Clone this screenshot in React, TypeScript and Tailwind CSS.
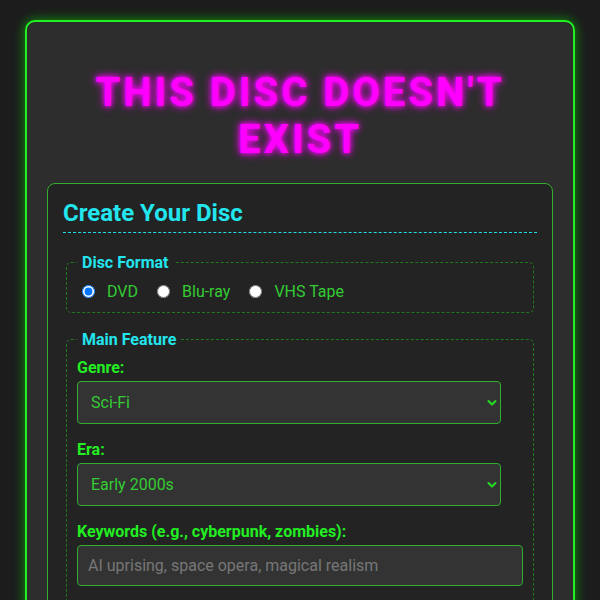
import { useState } from "react"

const formats = ["DVD", "Blu-ray", "VHS Tape"]

function Chevron() {
  return (
    <svg className="pointer-events-none absolute right-[4px] top-1/2 -translate-y-1/2" width="10" height="7" viewBox="0 0 10 7" fill="none">
      <path d="M1.5 1.5 5 5 8.5 1.5" stroke="#22dd22" strokeWidth="2" strokeLinecap="round" strokeLinejoin="round" />
    </svg>
  )
}

function Select({ value, options }: { value: string; options: string[] }) {
  return (
    <div className="relative mb-4 w-[95%]">
      <select
        defaultValue={value}
        className="block h-[43px] w-full appearance-none rounded-[4px] border border-[#2fae2f] bg-[#333333] pl-[13px] pr-6 text-[16px] leading-[normal] text-[#33cc33] outline-none"
      >
        {options.map((o) => (
          <option key={o}>{o}</option>
        ))}
      </select>
      <Chevron />
    </div>
  )
}

export default function App() {
  const [format, setFormat] = useState("DVD")

  return (
    <div className="min-h-screen bg-[#1c1c1c] px-5 pt-5 font-['Roboto',sans-serif] text-[16px] leading-[normal]">
      <div className="mx-auto max-w-[550px] rounded-[10px] border-2 border-[#22ee22] bg-[#2d2d2d] p-5 shadow-[0_0_12px_rgba(0,255,0,0.55)]">
        <h1 className="mt-[27px] mb-[20px] text-center text-[40px] font-bold uppercase leading-[47px] tracking-[3px] text-[#ff00ff] [text-shadow:0_0_5px_#ff00ff,0_0_10px_#ff00ff]">
          This Disc Doesn't Exist
        </h1>

        <div className="rounded-lg border border-[#2fae2f] bg-[#232323] p-[15px]">
          <h2 className="mb-[20px] border-b border-dashed border-[#22dde6] pb-[5px] text-[24px] font-bold leading-[28px] text-[#22e5ee]">
            Create Your Disc
          </h2>

          {/* format radios */}
          <fieldset className="mx-[3px] mb-[17px] rounded-[5px] border border-dashed border-[#1f7a1f] px-[10px] pb-[10px]">
            <legend className="px-[5px] font-bold text-[#22e5ee]">Disc Format</legend>
            <div className="pt-[10px] text-[#33cc33]">
              {formats.map((f) => (
                <label key={f} className="mr-[14px] inline-flex items-center">
                  <input
                    type="radio"
                    name="format"
                    checked={format === f}
                    onChange={() => setFormat(f)}
                    className="ml-[5px] mr-[12px] h-[13px] w-[13px]"
                  />
                  {f}
                </label>
              ))}
            </div>
          </fieldset>

          <fieldset className="mx-[3px] rounded-[5px] border border-dashed border-[#1f7a1f] px-[10px] pb-[10px]">
            <legend className="px-[5px] font-bold text-[#22e5ee]">Main Feature</legend>
            <div className="pt-[9px]">
              <label className="mb-[4px] block font-bold text-[#22ee22]">Genre:</label>
              <Select value="Sci-Fi" options={["Sci-Fi", "Horror", "Comedy", "Drama", "Action"]} />

              <label className="mb-[4px] block font-bold text-[#22ee22]">Era:</label>
              <Select value="Early 2000s" options={["1980s", "1990s", "Early 2000s", "2010s"]} />

              <label className="mb-[4px] block font-bold text-[#22ee22]">Keywords (e.g., cyberpunk, zombies):</label>
              <input
                type="text"
                placeholder="AI uprising, space opera, magical realism"
                className="mb-4 block h-[41px] w-full rounded-[4px] border border-[#2fae2f] bg-[#333333] px-[10px] text-[16px] text-[#33cc33] outline-none placeholder:text-[#777777]"
              />
            </div>
          </fieldset>
        </div>
      </div>
    </div>
  )
}
